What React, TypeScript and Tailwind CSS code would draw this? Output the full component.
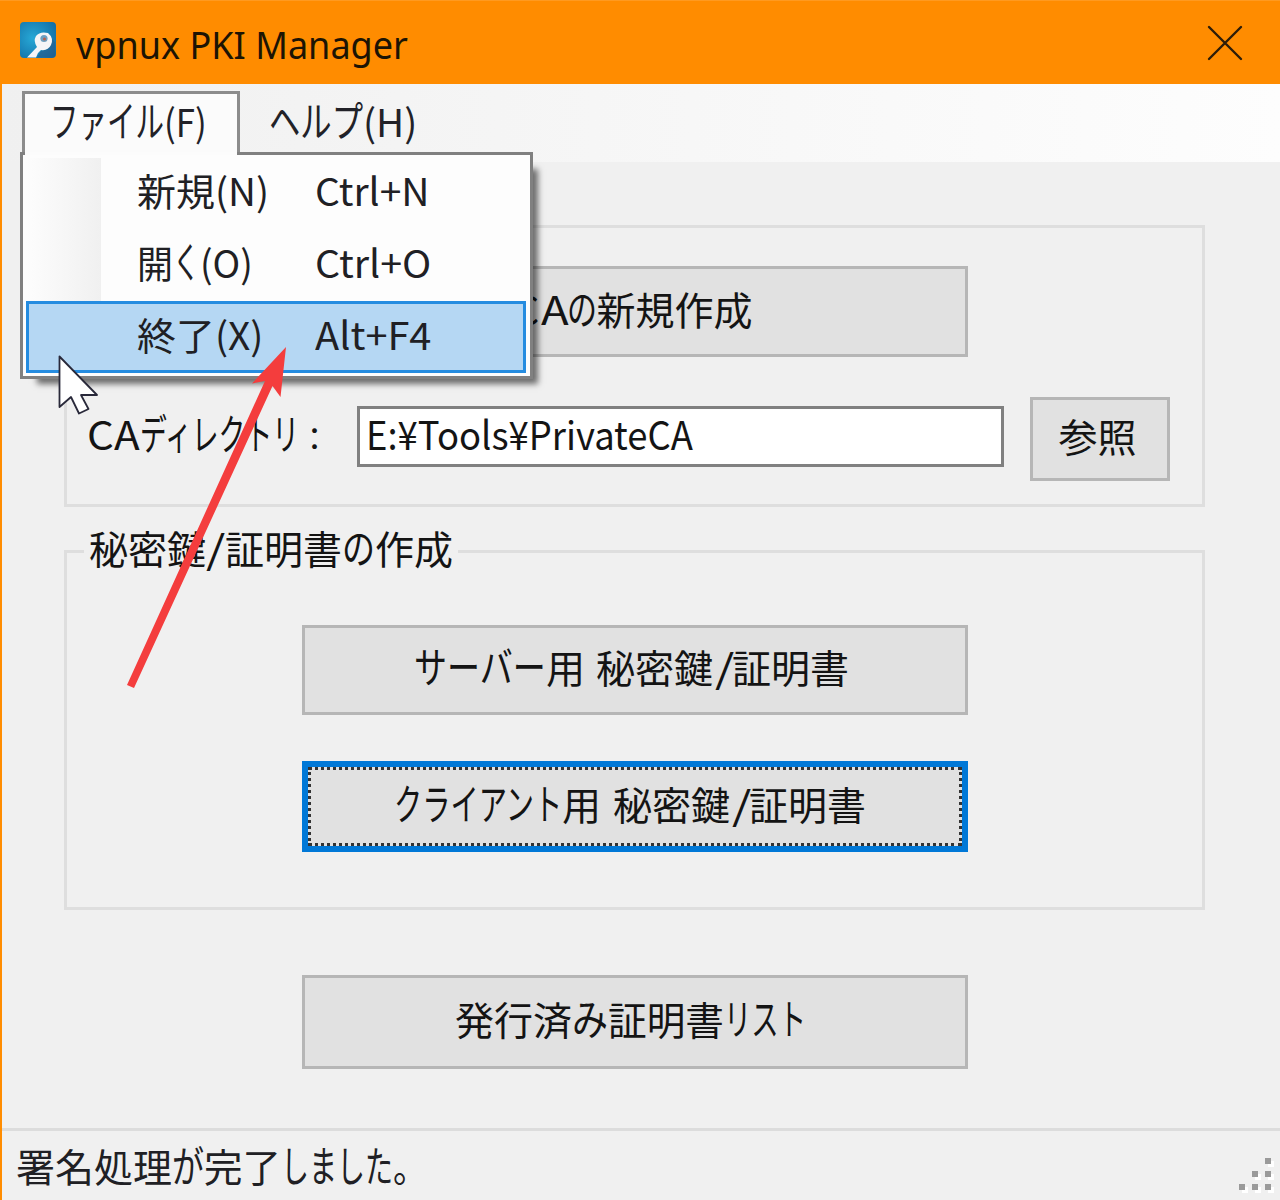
import { useLayoutEffect, useRef } from "react";
import type { ReactNode } from "react";

type Piece = [text: string, width: number];

const KANA = /^[\u3041-\u30ff]+$/;

/** A run of text condensed or widened to an exact advance width. */
function Run({ text, width }: { text: string; width: number }) {
  const ref = useRef<HTMLSpanElement>(null);
  useLayoutEffect(() => {
    const el = ref.current;
    if (el) el.style.transform = `scaleX(${width / el.offsetWidth})`;
  }, [text, width]);
  const size = KANA.test(text) ? "text-[42px]" : text === "：" ? "text-[31px]" : "";
  return (
    <span className={`block shrink-0 ${size ? "leading-[40px]" : ""}`} style={{ width }}>
      <span ref={ref} className={`inline-block origin-left whitespace-pre ${size}`}>
        {text}
      </span>
    </span>
  );
}

function Line({ parts }: { parts: Piece[] }) {
  return (
    <span className="flex h-[48px] items-baseline whitespace-pre">
      {parts.map(([t, w], i) => (
        <Run key={i} text={t} width={w} />
      ))}
    </span>
  );
}

const CERT: Piece[] = [
  ["秘密鍵", 117],
  ["/", 19],
  ["証明書", 117],
];

function PushButton({ parts, className }: { parts: Piece[]; className: string }) {
  return (
    <button
      className={`flex items-center justify-center border-[3px] border-[#b6b6b6] bg-[#e1e1e1] pb-[8px] ${className}`}
    >
      <Line parts={parts} />
    </button>
  );
}

function MenuItem({ parts, keys, active }: { parts: Piece[]; keys: Piece; active?: boolean }) {
  return (
    <div
      className={`flex h-[72px] items-center border-[3px] pb-[6px] pl-[108px] ${
        active ? "border-[#258ce0] bg-[#b5d7f3]" : "border-transparent"
      }`}
    >
      <div className="w-[178px]">
        <Line parts={parts} />
      </div>
      <Line parts={[keys]} />
    </div>
  );
}

function Group({ children, className }: { children: ReactNode; className: string }) {
  return <section className={`ml-[62px] w-[1141px] border-[3px] border-[#dedede] ${className}`}>{children}</section>;
}

export default function App() {
  return (
    <div className="relative flex h-[1200px] w-[1280px] flex-col overflow-hidden bg-[#f0f0f0] font-['Noto_Sans_CJK_JP',sans-serif] text-[39px] leading-[48px] text-[#141414]">
      <header className="flex h-[84px] shrink-0 items-start border-t border-[#ff9a20] bg-[#ff8c00] pl-[20px] font-['Noto_Sans',sans-serif] text-[38px] text-[#1c1404]">
        <svg className="mt-[21px] h-9 w-9" viewBox="0 0 36 36">
          <defs>
            <radialGradient id="tile" cx="0.35" cy="0.45" r="0.75">
              <stop offset="0" stopColor="#27a8d6" />
              <stop offset="1" stopColor="#126da5" />
            </radialGradient>
          </defs>
          <rect width="36" height="36" rx="4" fill="url(#tile)" />
          <path d="M17 35.5 L21 29 Q31 28 32 17 L35 20 V32 Q35 35.5 32 35.5Z" fill="#285b88" opacity="0.6" />
          <path d="M7 35.5 L17 25 Q13 19 16 14 Q20 9 28 11 Q34 16 31 23 Q28 29 21 28 L18 31 L16 35.5 Z" fill="#f5f5f7" />
          <circle cx="24" cy="16.5" r="3.6" fill="#6d9fc0" />
          <circle cx="24.5" cy="17" r="1.5" fill="#b8604f" />
        </svg>
        <h1 className="mt-[19px] ml-[20px]">
          <Line parts={[["vpnux PKI Manager", 332]]} />
        </h1>
        <svg className="mt-[23px] ml-auto mr-[36px] h-[38px] w-[38px]" viewBox="0 0 38 38" fill="none" stroke="#2d1d08" strokeWidth="2.4" strokeLinecap="round">
          <path d="M3 3 35 35M35 3 3 35" />
        </svg>
      </header>

      <div className="flex grow flex-col border-l-2 border-[#ff8c00]">
        <nav className="flex h-[78px] shrink-0 items-start bg-linear-to-r from-[#f0f0f0] to-[#fdfdfd] pl-[20px] pt-[7px] text-[38px] text-[#222228]">
          <div className="flex h-[71px] w-[218px] justify-start border-x-[3px] border-t-[3px] border-[#8c8c8c] bg-[#fbfbfb] pl-[25px] pt-[3px]">
            <Line parts={[["ファイル", 114], ["(F)", 43]]} />
          </div>
          <div className="pl-[29px] pt-[6px]">
            <Line parts={[["ヘルプ", 94], ["(H)", 54]]} />
          </div>
        </nav>

        <main className="flex grow flex-col">
          <Group className="mt-[63px] h-[282px]">
            <PushButton className="mt-[38px] ml-[235px] h-[91px] w-[666px] pr-px" parts={[["C", 22], ["A", 28], ["の", 30], ["新規作成", 156]]} />
            <div className="mt-[40px] flex items-start">
              <label className="mt-[12px] ml-[20px] w-[270px]">
                <Line parts={[["C", 27], ["A", 26], ["ディレクトリ", 159], ["：", 31]]} />
              </label>
              <div className="mt-[9px] flex h-[61px] w-[647px] items-center border-[3px] border-[#808080] bg-white pb-[7px] pl-[6px]">
                <Line parts={[["E:¥Tools¥PrivateCA", 327]]} />
              </div>
              <PushButton className="ml-[26px] h-[84px] w-[140px] pr-[5px]" parts={[["参照", 78]]} />
            </div>
          </Group>

          <Group className="mt-[43px] h-[360px]">
            <h2 className="-mt-[30px] ml-[17px] w-fit bg-[#f0f0f0] px-[5px]">
              <Line parts={[["秘密鍵", 117], ["/", 19], ["証明書", 117], ["の", 33], ["作成", 78]]} />
            </h2>
            <PushButton className="mt-[54px] ml-[235px] h-[90px] w-[666px] pr-[7px]" parts={[["サーバー", 132], ["用", 39], [" ", 11], ...CERT]} />
            <button className="mt-[46px] ml-[235px] h-[91px] w-[666px] border-[6px] border-[#0078d7] bg-[#e1e1e1]">
              <span className="flex h-full items-center justify-center border-[3px] border-dotted border-[#333333] pb-[7px] pr-[10px]">
                <Line parts={[["クライアント", 168], ["用", 39], [" ", 12], ...CERT]} />
              </span>
            </button>
          </Group>

          <PushButton className="mt-[65px] ml-[300px] h-[94px] w-[666px] pr-[9px]" parts={[["発行済", 117], ["み", 36], ["証明書", 116], ["リスト", 82]]} />
        </main>

        <footer className="flex h-[72px] shrink-0 border-t-[3px] border-[#dcdcdc] pt-[10px] pl-[14px] text-[#202024]">
          <Line parts={[["署名処理", 156], ["が", 32], ["完了", 77], ["しました", 112], ["。", 34]]} />
          <svg className="mt-[13px] ml-auto mr-[4px] h-[42px] w-[40px]" viewBox="0 0 40 42">
            {[[29, 4], [16, 17], [29, 17], [3, 30], [16, 30], [29, 30]].map(([x, y]) => (
              <g key={`${x}-${y}`}>
                <rect x={x + 3} y={y + 3} width="6" height="6" fill="#ffffff" />
                <rect x={x} y={y} width="6" height="6" fill="#9a9a9a" />
              </g>
            ))}
          </svg>
        </footer>
      </div>

      <div className="absolute top-[152px] left-[20px] h-[227px] w-[513px] border-[3px] border-[#808080] bg-[#fdfdfd] pt-[2px] pr-[4px] pl-[3px] text-[38px] text-[#202024] shadow-[11px_11px_6px_-6px_rgba(0,0,0,0.55)]">
        <div className="absolute top-[3px] left-[3px] h-[143px] w-[75px] bg-linear-to-r from-[#fdfdfd] to-[#f0f0f0]" />
        <div className="absolute -top-[3px] left-[2px] h-[3px] w-[212px] bg-[#fcfcfc]" />
        <div className="relative flex flex-col">
          <MenuItem parts={[["新規", 78], ["(N)", 54]]} keys={["Ctrl+N", 115]} />
          <MenuItem parts={[["開", 36], ["く", 27], ["(O)", 53]]} keys={["Ctrl+O", 116]} />
          <MenuItem active parts={[["終了", 78], ["(X)", 48]]} keys={["Alt+F4", 116]} />
        </div>
      </div>

      <svg className="pointer-events-none absolute inset-0 h-[1200px] w-[1280px]" viewBox="0 0 1280 1200">
        <path d="M59.5 356.5V407L71 397 79 413.5 88.5 409 81 395H97Z" fill="#fff" stroke="#29293a" strokeWidth="1.8" strokeLinejoin="round" />
        <path d="M286 347 280.5 397 272.5 386 134 688 127 685 265 381 252 383.5Z" fill="#f43d3d" />
      </svg>
    </div>
  );
}
